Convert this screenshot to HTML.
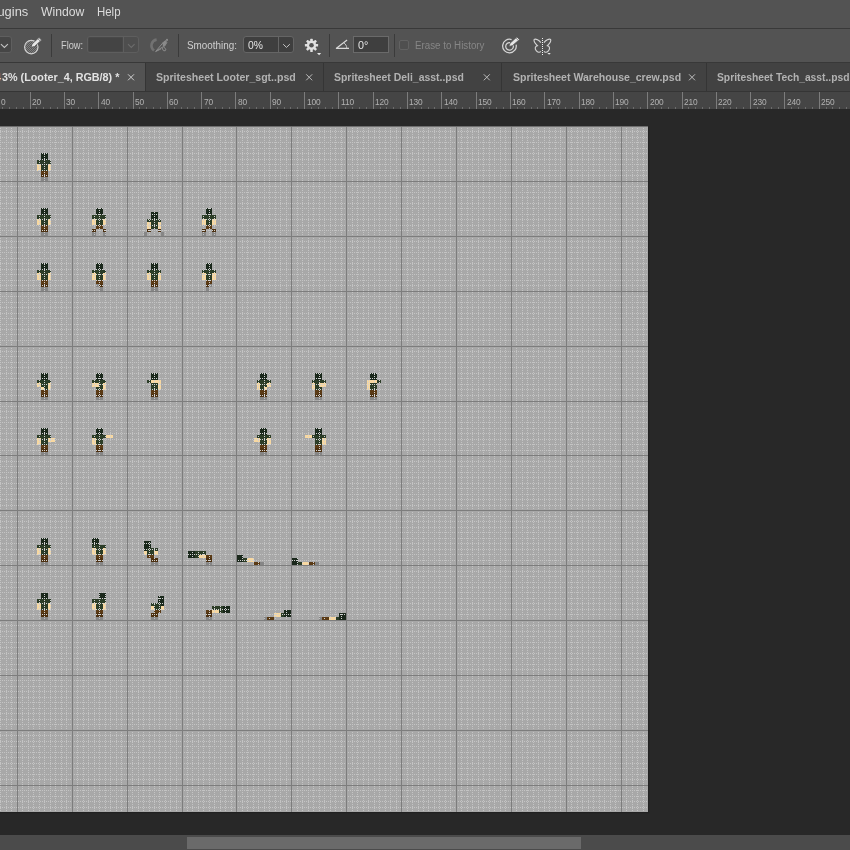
<!DOCTYPE html><html><head><meta charset="utf-8"><title>ps</title><style>

html,body{margin:0;padding:0}
body{width:850px;height:850px;overflow:hidden;position:relative;background:#282828;font-family:"Liberation Sans",sans-serif}
.a{position:absolute}
.t{position:absolute;white-space:nowrap;line-height:1;}
.rl{position:absolute;top:97.9px;font-size:8.8px;line-height:1;color:#b2b2b2;white-space:nowrap;letter-spacing:-0.1px;transform:scale(0.95,1.1);transform-origin:0 85%}

</style></head><body>
<div class="a" style="left:0;top:0;width:850px;height:62px;background:#535353"></div>
<div class="a" style="left:0;top:28px;width:850px;height:1px;background:#393939"></div>
<div class="a" style="left:0;top:62px;width:850px;height:30px;background:#424242"></div>
<div class="a" style="left:0;top:62px;width:850px;height:1px;background:#383838"></div>
<div class="a" style="left:0;top:63px;width:145px;height:29px;background:#535353"></div>
<div class="a" style="left:145px;top:63px;width:1px;height:28px;background:#353535"></div>
<div class="a" style="left:323px;top:63px;width:1px;height:28px;background:#353535"></div>
<div class="a" style="left:501px;top:63px;width:1px;height:28px;background:#353535"></div>
<div class="a" style="left:706px;top:63px;width:1px;height:28px;background:#353535"></div>
<div class="a" style="left:0;top:91px;width:850px;height:1px;background:#353535"></div>
<svg width="850" height="17" viewBox="0 92 850 17" style="position:absolute;left:0;top:92px" shape-rendering="crispEdges">
<rect x="0" y="92" width="850" height="17" fill="#454545"/>
<path d="M30.5 92 V109 M64.5 92 V109 M98.5 92 V109 M133.5 92 V109 M167.5 92 V109 M201.5 92 V109 M235.5 92 V109 M270.5 92 V109 M304.5 92 V109 M338.5 92 V109 M373.5 92 V109 M407.5 92 V109 M441.5 92 V109 M476.5 92 V109 M510.5 92 V109 M544.5 92 V109 M579.5 92 V109 M613.5 92 V109 M647.5 92 V109 M682.5 92 V109 M716.5 92 V109 M750.5 92 V109 M784.5 92 V109 M819.5 92 V109" stroke="#7c7c7c" stroke-width="1" fill="none"/>
<path d="M2.5 107 V109 M9.5 107 V109 M16.5 107 V109 M23.5 107 V109 M36.5 107 V109 M43.5 107 V109 M50.5 107 V109 M57.5 107 V109 M71.5 107 V109 M78.5 107 V109 M85.5 107 V109 M91.5 107 V109 M105.5 107 V109 M112.5 107 V109 M119.5 107 V109 M126.5 107 V109 M139.5 107 V109 M146.5 107 V109 M153.5 107 V109 M160.5 107 V109 M174.5 107 V109 M181.5 107 V109 M187.5 107 V109 M194.5 107 V109 M208.5 107 V109 M215.5 107 V109 M222.5 107 V109 M229.5 107 V109 M242.5 107 V109 M249.5 107 V109 M256.5 107 V109 M263.5 107 V109 M277.5 107 V109 M284.5 107 V109 M290.5 107 V109 M297.5 107 V109 M311.5 107 V109 M318.5 107 V109 M325.5 107 V109 M332.5 107 V109 M345.5 107 V109 M352.5 107 V109 M359.5 107 V109 M366.5 107 V109 M380.5 107 V109 M386.5 107 V109 M393.5 107 V109 M400.5 107 V109 M414.5 107 V109 M421.5 107 V109 M428.5 107 V109 M434.5 107 V109 M448.5 107 V109 M455.5 107 V109 M462.5 107 V109 M469.5 107 V109 M483.5 107 V109 M489.5 107 V109 M496.5 107 V109 M503.5 107 V109 M517.5 107 V109 M524.5 107 V109 M531.5 107 V109 M537.5 107 V109 M551.5 107 V109 M558.5 107 V109 M565.5 107 V109 M572.5 107 V109 M585.5 107 V109 M592.5 107 V109 M599.5 107 V109 M606.5 107 V109 M620.5 107 V109 M627.5 107 V109 M633.5 107 V109 M640.5 107 V109 M654.5 107 V109 M661.5 107 V109 M668.5 107 V109 M675.5 107 V109 M688.5 107 V109 M695.5 107 V109 M702.5 107 V109 M709.5 107 V109 M723.5 107 V109 M730.5 107 V109 M736.5 107 V109 M743.5 107 V109 M757.5 107 V109 M764.5 107 V109 M771.5 107 V109 M778.5 107 V109 M791.5 107 V109 M798.5 107 V109 M805.5 107 V109 M812.5 107 V109 M826.5 107 V109 M832.5 107 V109 M839.5 107 V109 M846.5 107 V109" stroke="#6c6c6c" stroke-width="1" fill="none"/>
</svg>
<span class="rl" style="left:1.2px">0</span>
<span class="rl" style="left:32.0px">20</span>
<span class="rl" style="left:66.3px">30</span>
<span class="rl" style="left:100.6px">40</span>
<span class="rl" style="left:135.0px">50</span>
<span class="rl" style="left:169.3px">60</span>
<span class="rl" style="left:203.6px">70</span>
<span class="rl" style="left:237.9px">80</span>
<span class="rl" style="left:272.2px">90</span>
<span class="rl" style="left:306.5px">100</span>
<span class="rl" style="left:340.8px">110</span>
<span class="rl" style="left:375.1px">120</span>
<span class="rl" style="left:409.4px">130</span>
<span class="rl" style="left:443.7px">140</span>
<span class="rl" style="left:478.1px">150</span>
<span class="rl" style="left:512.4px">160</span>
<span class="rl" style="left:546.7px">170</span>
<span class="rl" style="left:581.0px">180</span>
<span class="rl" style="left:615.3px">190</span>
<span class="rl" style="left:649.6px">200</span>
<span class="rl" style="left:683.9px">210</span>
<span class="rl" style="left:718.2px">220</span>
<span class="rl" style="left:752.5px">230</span>
<span class="rl" style="left:786.8px">240</span>
<span class="rl" style="left:821.1px">250</span>
<svg width="850" height="850" viewBox="0 0 850 850" style="position:absolute;left:0;top:0" shape-rendering="crispEdges">
<defs>
<clipPath id="cv"><rect x="0" y="127" width="648" height="685"/></clipPath>
<clipPath id="sp">
<rect x="41" y="153" width="7" height="4"/>
<rect x="41" y="157" width="7" height="3"/>
<rect x="37" y="160" width="14" height="4"/>
<rect x="41" y="164" width="7" height="3"/>
<rect x="37" y="164" width="4" height="3"/>
<rect x="48" y="164" width="3" height="3"/>
<rect x="41" y="167" width="7" height="4"/>
<rect x="37" y="167" width="4" height="4"/>
<rect x="48" y="167" width="3" height="4"/>
<rect x="41" y="171" width="7" height="3"/>
<rect x="41" y="174" width="7" height="3"/>
<rect x="41" y="208" width="7" height="4"/>
<rect x="96" y="208" width="7" height="4"/>
<rect x="206" y="208" width="6" height="4"/>
<rect x="41" y="212" width="7" height="3"/>
<rect x="96" y="212" width="7" height="3"/>
<rect x="151" y="212" width="7" height="3"/>
<rect x="206" y="212" width="6" height="3"/>
<rect x="151" y="215" width="7" height="4"/>
<rect x="37" y="215" width="14" height="4"/>
<rect x="92" y="215" width="14" height="4"/>
<rect x="202" y="215" width="14" height="4"/>
<rect x="41" y="219" width="7" height="3"/>
<rect x="96" y="219" width="7" height="3"/>
<rect x="147" y="219" width="14" height="3"/>
<rect x="206" y="219" width="6" height="3"/>
<rect x="37" y="219" width="4" height="3"/>
<rect x="48" y="219" width="3" height="3"/>
<rect x="92" y="219" width="4" height="3"/>
<rect x="103" y="219" width="3" height="3"/>
<rect x="202" y="219" width="4" height="3"/>
<rect x="212" y="219" width="4" height="3"/>
<rect x="41" y="222" width="7" height="3"/>
<rect x="96" y="222" width="7" height="3"/>
<rect x="151" y="222" width="7" height="3"/>
<rect x="206" y="222" width="6" height="3"/>
<rect x="37" y="222" width="4" height="3"/>
<rect x="48" y="222" width="3" height="3"/>
<rect x="92" y="222" width="4" height="3"/>
<rect x="103" y="222" width="3" height="3"/>
<rect x="147" y="222" width="4" height="3"/>
<rect x="158" y="222" width="3" height="3"/>
<rect x="202" y="222" width="4" height="3"/>
<rect x="212" y="222" width="4" height="3"/>
<rect x="151" y="225" width="7" height="4"/>
<rect x="41" y="225" width="7" height="4"/>
<rect x="96" y="225" width="7" height="4"/>
<rect x="206" y="225" width="6" height="4"/>
<rect x="147" y="225" width="4" height="4"/>
<rect x="158" y="225" width="3" height="4"/>
<rect x="41" y="229" width="7" height="3"/>
<rect x="92" y="229" width="4" height="3"/>
<rect x="103" y="229" width="3" height="3"/>
<rect x="147" y="229" width="4" height="3"/>
<rect x="158" y="229" width="3" height="3"/>
<rect x="202" y="229" width="4" height="3"/>
<rect x="212" y="229" width="4" height="3"/>
<rect x="41" y="263" width="7" height="4"/>
<rect x="96" y="263" width="7" height="4"/>
<rect x="151" y="263" width="7" height="4"/>
<rect x="206" y="263" width="6" height="4"/>
<rect x="41" y="267" width="7" height="3"/>
<rect x="96" y="267" width="7" height="3"/>
<rect x="151" y="267" width="7" height="3"/>
<rect x="206" y="267" width="6" height="3"/>
<rect x="37" y="270" width="14" height="3"/>
<rect x="92" y="270" width="14" height="3"/>
<rect x="147" y="270" width="14" height="3"/>
<rect x="202" y="270" width="14" height="3"/>
<rect x="41" y="273" width="7" height="4"/>
<rect x="96" y="273" width="7" height="4"/>
<rect x="151" y="273" width="7" height="4"/>
<rect x="206" y="273" width="6" height="4"/>
<rect x="37" y="273" width="4" height="4"/>
<rect x="48" y="273" width="3" height="4"/>
<rect x="92" y="273" width="4" height="4"/>
<rect x="103" y="273" width="3" height="4"/>
<rect x="147" y="273" width="4" height="4"/>
<rect x="158" y="273" width="3" height="4"/>
<rect x="202" y="273" width="4" height="4"/>
<rect x="212" y="273" width="4" height="4"/>
<rect x="41" y="277" width="7" height="3"/>
<rect x="96" y="277" width="7" height="3"/>
<rect x="151" y="277" width="7" height="3"/>
<rect x="206" y="277" width="6" height="3"/>
<rect x="37" y="277" width="4" height="3"/>
<rect x="48" y="277" width="3" height="3"/>
<rect x="92" y="277" width="4" height="3"/>
<rect x="103" y="277" width="3" height="3"/>
<rect x="147" y="277" width="4" height="3"/>
<rect x="158" y="277" width="3" height="3"/>
<rect x="202" y="277" width="4" height="3"/>
<rect x="212" y="277" width="4" height="3"/>
<rect x="41" y="280" width="7" height="4"/>
<rect x="96" y="280" width="7" height="4"/>
<rect x="151" y="280" width="7" height="4"/>
<rect x="206" y="280" width="6" height="4"/>
<rect x="41" y="284" width="7" height="3"/>
<rect x="99" y="284" width="4" height="3"/>
<rect x="151" y="284" width="7" height="3"/>
<rect x="206" y="284" width="3" height="3"/>
<rect x="41" y="373" width="7" height="3"/>
<rect x="96" y="373" width="7" height="3"/>
<rect x="151" y="373" width="7" height="3"/>
<rect x="260" y="373" width="7" height="3"/>
<rect x="315" y="373" width="7" height="3"/>
<rect x="370" y="373" width="7" height="3"/>
<rect x="41" y="376" width="7" height="4"/>
<rect x="96" y="376" width="7" height="4"/>
<rect x="151" y="376" width="7" height="4"/>
<rect x="260" y="376" width="7" height="4"/>
<rect x="315" y="376" width="7" height="4"/>
<rect x="370" y="376" width="7" height="4"/>
<rect x="37" y="380" width="14" height="3"/>
<rect x="92" y="380" width="14" height="3"/>
<rect x="147" y="380" width="4" height="3"/>
<rect x="257" y="380" width="14" height="3"/>
<rect x="312" y="380" width="14" height="3"/>
<rect x="377" y="380" width="4" height="3"/>
<rect x="151" y="380" width="10" height="3"/>
<rect x="367" y="380" width="10" height="3"/>
<rect x="41" y="383" width="7" height="4"/>
<rect x="99" y="383" width="4" height="4"/>
<rect x="151" y="383" width="7" height="4"/>
<rect x="260" y="383" width="7" height="4"/>
<rect x="315" y="383" width="4" height="4"/>
<rect x="370" y="383" width="7" height="4"/>
<rect x="37" y="383" width="4" height="4"/>
<rect x="48" y="383" width="3" height="4"/>
<rect x="92" y="383" width="7" height="4"/>
<rect x="103" y="383" width="3" height="4"/>
<rect x="158" y="383" width="3" height="4"/>
<rect x="257" y="383" width="3" height="4"/>
<rect x="267" y="383" width="4" height="4"/>
<rect x="312" y="383" width="3" height="4"/>
<rect x="319" y="383" width="7" height="4"/>
<rect x="367" y="383" width="3" height="4"/>
<rect x="44" y="387" width="4" height="3"/>
<rect x="96" y="387" width="7" height="3"/>
<rect x="151" y="387" width="7" height="3"/>
<rect x="260" y="387" width="4" height="3"/>
<rect x="315" y="387" width="7" height="3"/>
<rect x="370" y="387" width="7" height="3"/>
<rect x="41" y="387" width="3" height="3"/>
<rect x="48" y="387" width="3" height="3"/>
<rect x="103" y="387" width="3" height="3"/>
<rect x="158" y="387" width="3" height="3"/>
<rect x="257" y="387" width="3" height="3"/>
<rect x="264" y="387" width="3" height="3"/>
<rect x="312" y="387" width="3" height="3"/>
<rect x="367" y="387" width="3" height="3"/>
<rect x="41" y="390" width="7" height="4"/>
<rect x="96" y="390" width="7" height="4"/>
<rect x="151" y="390" width="7" height="4"/>
<rect x="260" y="390" width="7" height="4"/>
<rect x="315" y="390" width="7" height="4"/>
<rect x="370" y="390" width="7" height="4"/>
<rect x="41" y="394" width="7" height="3"/>
<rect x="96" y="394" width="7" height="3"/>
<rect x="151" y="394" width="7" height="3"/>
<rect x="260" y="394" width="7" height="3"/>
<rect x="315" y="394" width="7" height="3"/>
<rect x="370" y="394" width="7" height="3"/>
<rect x="41" y="428" width="7" height="3"/>
<rect x="96" y="428" width="7" height="3"/>
<rect x="260" y="428" width="7" height="3"/>
<rect x="315" y="428" width="7" height="3"/>
<rect x="41" y="431" width="7" height="4"/>
<rect x="96" y="431" width="7" height="4"/>
<rect x="260" y="431" width="7" height="4"/>
<rect x="315" y="431" width="7" height="4"/>
<rect x="37" y="435" width="14" height="3"/>
<rect x="92" y="435" width="14" height="3"/>
<rect x="257" y="435" width="14" height="3"/>
<rect x="312" y="435" width="14" height="3"/>
<rect x="106" y="435" width="7" height="3"/>
<rect x="305" y="435" width="7" height="3"/>
<rect x="41" y="438" width="7" height="4"/>
<rect x="96" y="438" width="7" height="4"/>
<rect x="260" y="438" width="7" height="4"/>
<rect x="315" y="438" width="7" height="4"/>
<rect x="37" y="438" width="4" height="4"/>
<rect x="48" y="438" width="7" height="4"/>
<rect x="92" y="438" width="4" height="4"/>
<rect x="254" y="438" width="6" height="4"/>
<rect x="267" y="438" width="4" height="4"/>
<rect x="322" y="438" width="4" height="4"/>
<rect x="41" y="442" width="7" height="3"/>
<rect x="96" y="442" width="7" height="3"/>
<rect x="260" y="442" width="7" height="3"/>
<rect x="315" y="442" width="7" height="3"/>
<rect x="37" y="442" width="4" height="3"/>
<rect x="92" y="442" width="4" height="3"/>
<rect x="267" y="442" width="4" height="3"/>
<rect x="322" y="442" width="4" height="3"/>
<rect x="41" y="445" width="7" height="3"/>
<rect x="96" y="445" width="7" height="3"/>
<rect x="260" y="445" width="7" height="3"/>
<rect x="315" y="445" width="7" height="3"/>
<rect x="41" y="448" width="7" height="4"/>
<rect x="96" y="448" width="7" height="4"/>
<rect x="260" y="448" width="7" height="4"/>
<rect x="315" y="448" width="7" height="4"/>
<rect x="41" y="538" width="7" height="3"/>
<rect x="92" y="538" width="7" height="3"/>
<rect x="41" y="541" width="7" height="4"/>
<rect x="92" y="541" width="7" height="4"/>
<rect x="144" y="541" width="7" height="4"/>
<rect x="144" y="545" width="7" height="3"/>
<rect x="37" y="545" width="14" height="3"/>
<rect x="92" y="545" width="14" height="3"/>
<rect x="144" y="548" width="3" height="3"/>
<rect x="41" y="548" width="7" height="3"/>
<rect x="96" y="548" width="7" height="3"/>
<rect x="147" y="548" width="11" height="3"/>
<rect x="37" y="548" width="4" height="3"/>
<rect x="48" y="548" width="3" height="3"/>
<rect x="92" y="548" width="4" height="3"/>
<rect x="103" y="548" width="3" height="3"/>
<rect x="188" y="551" width="7" height="4"/>
<rect x="41" y="551" width="7" height="4"/>
<rect x="96" y="551" width="7" height="4"/>
<rect x="147" y="551" width="7" height="4"/>
<rect x="195" y="551" width="11" height="4"/>
<rect x="37" y="551" width="4" height="4"/>
<rect x="48" y="551" width="3" height="4"/>
<rect x="92" y="551" width="4" height="4"/>
<rect x="103" y="551" width="3" height="4"/>
<rect x="144" y="551" width="3" height="4"/>
<rect x="154" y="551" width="4" height="4"/>
<rect x="188" y="555" width="7" height="3"/>
<rect x="236" y="555" width="7" height="3"/>
<rect x="195" y="555" width="4" height="3"/>
<rect x="41" y="555" width="7" height="3"/>
<rect x="96" y="555" width="7" height="3"/>
<rect x="147" y="555" width="7" height="3"/>
<rect x="206" y="555" width="6" height="3"/>
<rect x="199" y="555" width="7" height="3"/>
<rect x="236" y="558" width="7" height="4"/>
<rect x="291" y="558" width="7" height="4"/>
<rect x="243" y="558" width="4" height="4"/>
<rect x="41" y="558" width="7" height="4"/>
<rect x="96" y="558" width="7" height="4"/>
<rect x="151" y="558" width="7" height="4"/>
<rect x="206" y="558" width="6" height="4"/>
<rect x="247" y="558" width="7" height="4"/>
<rect x="291" y="562" width="7" height="3"/>
<rect x="298" y="562" width="4" height="3"/>
<rect x="254" y="562" width="6" height="3"/>
<rect x="309" y="562" width="6" height="3"/>
<rect x="302" y="562" width="7" height="3"/>
<rect x="41" y="593" width="7" height="3"/>
<rect x="99" y="593" width="7" height="3"/>
<rect x="41" y="596" width="7" height="3"/>
<rect x="99" y="596" width="7" height="3"/>
<rect x="158" y="596" width="6" height="3"/>
<rect x="158" y="599" width="6" height="4"/>
<rect x="37" y="599" width="14" height="4"/>
<rect x="92" y="599" width="14" height="4"/>
<rect x="161" y="603" width="3" height="3"/>
<rect x="41" y="603" width="7" height="3"/>
<rect x="96" y="603" width="7" height="3"/>
<rect x="151" y="603" width="10" height="3"/>
<rect x="37" y="603" width="4" height="3"/>
<rect x="48" y="603" width="3" height="3"/>
<rect x="92" y="603" width="4" height="3"/>
<rect x="103" y="603" width="3" height="3"/>
<rect x="223" y="606" width="7" height="4"/>
<rect x="41" y="606" width="7" height="4"/>
<rect x="96" y="606" width="7" height="4"/>
<rect x="154" y="606" width="7" height="4"/>
<rect x="212" y="606" width="11" height="4"/>
<rect x="37" y="606" width="4" height="4"/>
<rect x="48" y="606" width="3" height="4"/>
<rect x="92" y="606" width="4" height="4"/>
<rect x="103" y="606" width="3" height="4"/>
<rect x="151" y="606" width="3" height="4"/>
<rect x="161" y="606" width="3" height="4"/>
<rect x="223" y="610" width="7" height="3"/>
<rect x="284" y="610" width="7" height="3"/>
<rect x="219" y="610" width="4" height="3"/>
<rect x="41" y="610" width="7" height="3"/>
<rect x="96" y="610" width="7" height="3"/>
<rect x="154" y="610" width="7" height="3"/>
<rect x="206" y="610" width="6" height="3"/>
<rect x="212" y="610" width="7" height="3"/>
<rect x="284" y="613" width="7" height="4"/>
<rect x="339" y="613" width="7" height="4"/>
<rect x="281" y="613" width="3" height="4"/>
<rect x="41" y="613" width="7" height="4"/>
<rect x="96" y="613" width="7" height="4"/>
<rect x="151" y="613" width="7" height="4"/>
<rect x="206" y="613" width="6" height="4"/>
<rect x="274" y="613" width="7" height="4"/>
<rect x="339" y="617" width="7" height="3"/>
<rect x="336" y="617" width="3" height="3"/>
<rect x="267" y="617" width="7" height="3"/>
<rect x="322" y="617" width="7" height="3"/>
<rect x="329" y="617" width="7" height="3"/>
</clipPath>
<g id="dots" stroke-width="1" stroke-dasharray="1 1" fill="none">
<path d="M0.5 126 V812"/>
<path d="M6.5 126 V812"/>
<path d="M11.5 126 V812"/>
<path d="M22.5 126 V812"/>
<path d="M28.5 126 V812"/>
<path d="M33.5 126 V812"/>
<path d="M39.5 126 V812"/>
<path d="M44.5 126 V812"/>
<path d="M50.5 126 V812"/>
<path d="M55.5 126 V812"/>
<path d="M61.5 126 V812"/>
<path d="M66.5 126 V812"/>
<path d="M77.5 126 V812"/>
<path d="M83.5 126 V812"/>
<path d="M88.5 126 V812"/>
<path d="M94.5 126 V812"/>
<path d="M99.5 126 V812"/>
<path d="M105.5 126 V812"/>
<path d="M110.5 126 V812"/>
<path d="M116.5 126 V812"/>
<path d="M121.5 126 V812"/>
<path d="M132.5 126 V812"/>
<path d="M138.5 126 V812"/>
<path d="M143.5 126 V812"/>
<path d="M149.5 126 V812"/>
<path d="M154.5 126 V812"/>
<path d="M159.5 126 V812"/>
<path d="M165.5 126 V812"/>
<path d="M170.5 126 V812"/>
<path d="M176.5 126 V812"/>
<path d="M187.5 126 V812"/>
<path d="M192.5 126 V812"/>
<path d="M198.5 126 V812"/>
<path d="M203.5 126 V812"/>
<path d="M209.5 126 V812"/>
<path d="M214.5 126 V812"/>
<path d="M220.5 126 V812"/>
<path d="M225.5 126 V812"/>
<path d="M231.5 126 V812"/>
<path d="M242.5 126 V812"/>
<path d="M247.5 126 V812"/>
<path d="M253.5 126 V812"/>
<path d="M258.5 126 V812"/>
<path d="M264.5 126 V812"/>
<path d="M269.5 126 V812"/>
<path d="M275.5 126 V812"/>
<path d="M280.5 126 V812"/>
<path d="M286.5 126 V812"/>
<path d="M297.5 126 V812"/>
<path d="M302.5 126 V812"/>
<path d="M308.5 126 V812"/>
<path d="M313.5 126 V812"/>
<path d="M319.5 126 V812"/>
<path d="M324.5 126 V812"/>
<path d="M330.5 126 V812"/>
<path d="M335.5 126 V812"/>
<path d="M341.5 126 V812"/>
<path d="M352.5 126 V812"/>
<path d="M357.5 126 V812"/>
<path d="M363.5 126 V812"/>
<path d="M368.5 126 V812"/>
<path d="M374.5 126 V812"/>
<path d="M379.5 126 V812"/>
<path d="M385.5 126 V812"/>
<path d="M390.5 126 V812"/>
<path d="M396.5 126 V812"/>
<path d="M407.5 126 V812"/>
<path d="M412.5 126 V812"/>
<path d="M418.5 126 V812"/>
<path d="M423.5 126 V812"/>
<path d="M428.5 126 V812"/>
<path d="M434.5 126 V812"/>
<path d="M439.5 126 V812"/>
<path d="M445.5 126 V812"/>
<path d="M450.5 126 V812"/>
<path d="M461.5 126 V812"/>
<path d="M467.5 126 V812"/>
<path d="M472.5 126 V812"/>
<path d="M478.5 126 V812"/>
<path d="M483.5 126 V812"/>
<path d="M489.5 126 V812"/>
<path d="M494.5 126 V812"/>
<path d="M500.5 126 V812"/>
<path d="M505.5 126 V812"/>
<path d="M516.5 126 V812"/>
<path d="M522.5 126 V812"/>
<path d="M527.5 126 V812"/>
<path d="M533.5 126 V812"/>
<path d="M538.5 126 V812"/>
<path d="M544.5 126 V812"/>
<path d="M549.5 126 V812"/>
<path d="M555.5 126 V812"/>
<path d="M560.5 126 V812"/>
<path d="M571.5 126 V812"/>
<path d="M577.5 126 V812"/>
<path d="M582.5 126 V812"/>
<path d="M588.5 126 V812"/>
<path d="M593.5 126 V812"/>
<path d="M599.5 126 V812"/>
<path d="M604.5 126 V812"/>
<path d="M610.5 126 V812"/>
<path d="M615.5 126 V812"/>
<path d="M626.5 126 V812"/>
<path d="M632.5 126 V812"/>
<path d="M637.5 126 V812"/>
<path d="M643.5 126 V812"/>
<path d="M0 131.5 H648"/>
<path d="M0 137.5 H648"/>
<path d="M0 142.5 H648"/>
<path d="M0 148.5 H648"/>
<path d="M0 153.5 H648"/>
<path d="M0 159.5 H648"/>
<path d="M0 164.5 H648"/>
<path d="M0 170.5 H648"/>
<path d="M0 175.5 H648"/>
<path d="M0 186.5 H648"/>
<path d="M0 192.5 H648"/>
<path d="M0 197.5 H648"/>
<path d="M0 203.5 H648"/>
<path d="M0 208.5 H648"/>
<path d="M0 214.5 H648"/>
<path d="M0 219.5 H648"/>
<path d="M0 225.5 H648"/>
<path d="M0 230.5 H648"/>
<path d="M0 241.5 H648"/>
<path d="M0 247.5 H648"/>
<path d="M0 252.5 H648"/>
<path d="M0 258.5 H648"/>
<path d="M0 263.5 H648"/>
<path d="M0 269.5 H648"/>
<path d="M0 274.5 H648"/>
<path d="M0 280.5 H648"/>
<path d="M0 285.5 H648"/>
<path d="M0 296.5 H648"/>
<path d="M0 302.5 H648"/>
<path d="M0 307.5 H648"/>
<path d="M0 313.5 H648"/>
<path d="M0 318.5 H648"/>
<path d="M0 324.5 H648"/>
<path d="M0 329.5 H648"/>
<path d="M0 334.5 H648"/>
<path d="M0 340.5 H648"/>
<path d="M0 351.5 H648"/>
<path d="M0 356.5 H648"/>
<path d="M0 362.5 H648"/>
<path d="M0 367.5 H648"/>
<path d="M0 373.5 H648"/>
<path d="M0 378.5 H648"/>
<path d="M0 384.5 H648"/>
<path d="M0 389.5 H648"/>
<path d="M0 395.5 H648"/>
<path d="M0 406.5 H648"/>
<path d="M0 411.5 H648"/>
<path d="M0 417.5 H648"/>
<path d="M0 422.5 H648"/>
<path d="M0 428.5 H648"/>
<path d="M0 433.5 H648"/>
<path d="M0 439.5 H648"/>
<path d="M0 444.5 H648"/>
<path d="M0 450.5 H648"/>
<path d="M0 461.5 H648"/>
<path d="M0 466.5 H648"/>
<path d="M0 472.5 H648"/>
<path d="M0 477.5 H648"/>
<path d="M0 483.5 H648"/>
<path d="M0 488.5 H648"/>
<path d="M0 494.5 H648"/>
<path d="M0 499.5 H648"/>
<path d="M0 505.5 H648"/>
<path d="M0 516.5 H648"/>
<path d="M0 521.5 H648"/>
<path d="M0 527.5 H648"/>
<path d="M0 532.5 H648"/>
<path d="M0 538.5 H648"/>
<path d="M0 543.5 H648"/>
<path d="M0 549.5 H648"/>
<path d="M0 554.5 H648"/>
<path d="M0 560.5 H648"/>
<path d="M0 571.5 H648"/>
<path d="M0 576.5 H648"/>
<path d="M0 582.5 H648"/>
<path d="M0 587.5 H648"/>
<path d="M0 592.5 H648"/>
<path d="M0 598.5 H648"/>
<path d="M0 603.5 H648"/>
<path d="M0 609.5 H648"/>
<path d="M0 614.5 H648"/>
<path d="M0 625.5 H648"/>
<path d="M0 631.5 H648"/>
<path d="M0 636.5 H648"/>
<path d="M0 642.5 H648"/>
<path d="M0 647.5 H648"/>
<path d="M0 653.5 H648"/>
<path d="M0 658.5 H648"/>
<path d="M0 664.5 H648"/>
<path d="M0 669.5 H648"/>
<path d="M0 680.5 H648"/>
<path d="M0 686.5 H648"/>
<path d="M0 691.5 H648"/>
<path d="M0 697.5 H648"/>
<path d="M0 702.5 H648"/>
<path d="M0 708.5 H648"/>
<path d="M0 713.5 H648"/>
<path d="M0 719.5 H648"/>
<path d="M0 724.5 H648"/>
<path d="M0 735.5 H648"/>
<path d="M0 741.5 H648"/>
<path d="M0 746.5 H648"/>
<path d="M0 752.5 H648"/>
<path d="M0 757.5 H648"/>
<path d="M0 763.5 H648"/>
<path d="M0 768.5 H648"/>
<path d="M0 774.5 H648"/>
<path d="M0 779.5 H648"/>
<path d="M0 790.5 H648"/>
<path d="M0 796.5 H648"/>
<path d="M0 801.5 H648"/>
<path d="M0 807.5 H648"/>
</g>
</defs>
<rect x="-40" y="126" width="690" height="688" fill="#262626"/>
<rect x="-40" y="127" width="689" height="686" fill="#212121"/>
<rect x="-40" y="126" width="688" height="1" fill="#6e6e6e"/>
<rect x="-40" y="127" width="688" height="685" fill="#a8a8a8"/>
<rect x="41" y="153" width="7" height="4" fill="#1a281b"/>
<rect x="41" y="157" width="7" height="3" fill="#1a281b"/>
<rect x="37" y="160" width="14" height="4" fill="#2c3d27"/>
<rect x="41" y="164" width="7" height="3" fill="#2c3d27"/>
<rect x="37" y="164" width="4" height="3" fill="#f7d8a2"/>
<rect x="48" y="164" width="3" height="3" fill="#f7d8a2"/>
<rect x="41" y="167" width="7" height="4" fill="#2c3d27"/>
<rect x="37" y="167" width="4" height="4" fill="#f7d8a2"/>
<rect x="48" y="167" width="3" height="4" fill="#f7d8a2"/>
<rect x="41" y="171" width="7" height="3" fill="#5a3a15"/>
<rect x="41" y="174" width="7" height="3" fill="#4c3010"/>
<rect x="41" y="177" width="7" height="4" fill="#868686"/>
<rect x="41" y="208" width="7" height="4" fill="#1a281b"/>
<rect x="96" y="208" width="7" height="4" fill="#1a281b"/>
<rect x="206" y="208" width="6" height="4" fill="#1a281b"/>
<rect x="41" y="212" width="7" height="3" fill="#1a281b"/>
<rect x="96" y="212" width="7" height="3" fill="#1a281b"/>
<rect x="151" y="212" width="7" height="3" fill="#1a281b"/>
<rect x="206" y="212" width="6" height="3" fill="#1a281b"/>
<rect x="151" y="215" width="7" height="4" fill="#1a281b"/>
<rect x="37" y="215" width="14" height="4" fill="#2c3d27"/>
<rect x="92" y="215" width="14" height="4" fill="#2c3d27"/>
<rect x="202" y="215" width="14" height="4" fill="#2c3d27"/>
<rect x="41" y="219" width="7" height="3" fill="#2c3d27"/>
<rect x="96" y="219" width="7" height="3" fill="#2c3d27"/>
<rect x="147" y="219" width="14" height="3" fill="#2c3d27"/>
<rect x="206" y="219" width="6" height="3" fill="#2c3d27"/>
<rect x="37" y="219" width="4" height="3" fill="#f7d8a2"/>
<rect x="48" y="219" width="3" height="3" fill="#f7d8a2"/>
<rect x="92" y="219" width="4" height="3" fill="#f7d8a2"/>
<rect x="103" y="219" width="3" height="3" fill="#f7d8a2"/>
<rect x="202" y="219" width="4" height="3" fill="#f7d8a2"/>
<rect x="212" y="219" width="4" height="3" fill="#f7d8a2"/>
<rect x="41" y="222" width="7" height="3" fill="#2c3d27"/>
<rect x="96" y="222" width="7" height="3" fill="#2c3d27"/>
<rect x="151" y="222" width="7" height="3" fill="#2c3d27"/>
<rect x="206" y="222" width="6" height="3" fill="#2c3d27"/>
<rect x="37" y="222" width="4" height="3" fill="#f7d8a2"/>
<rect x="48" y="222" width="3" height="3" fill="#f7d8a2"/>
<rect x="92" y="222" width="4" height="3" fill="#f7d8a2"/>
<rect x="103" y="222" width="3" height="3" fill="#f7d8a2"/>
<rect x="147" y="222" width="4" height="3" fill="#f7d8a2"/>
<rect x="158" y="222" width="3" height="3" fill="#f7d8a2"/>
<rect x="202" y="222" width="4" height="3" fill="#f7d8a2"/>
<rect x="212" y="222" width="4" height="3" fill="#f7d8a2"/>
<rect x="151" y="225" width="7" height="4" fill="#2c3d27"/>
<rect x="41" y="225" width="7" height="4" fill="#5a3a15"/>
<rect x="96" y="225" width="7" height="4" fill="#5a3a15"/>
<rect x="206" y="225" width="6" height="4" fill="#5a3a15"/>
<rect x="147" y="225" width="4" height="4" fill="#f7d8a2"/>
<rect x="158" y="225" width="3" height="4" fill="#f7d8a2"/>
<rect x="41" y="229" width="7" height="3" fill="#4c3010"/>
<rect x="92" y="229" width="4" height="3" fill="#4c3010"/>
<rect x="103" y="229" width="3" height="3" fill="#4c3010"/>
<rect x="147" y="229" width="4" height="3" fill="#4c3010"/>
<rect x="158" y="229" width="3" height="3" fill="#4c3010"/>
<rect x="202" y="229" width="4" height="3" fill="#4c3010"/>
<rect x="212" y="229" width="4" height="3" fill="#4c3010"/>
<rect x="41" y="232" width="7" height="4" fill="#868686"/>
<rect x="92" y="232" width="4" height="4" fill="#868686"/>
<rect x="103" y="232" width="3" height="4" fill="#868686"/>
<rect x="144" y="232" width="3" height="4" fill="#868686"/>
<rect x="161" y="232" width="3" height="4" fill="#868686"/>
<rect x="202" y="232" width="4" height="4" fill="#868686"/>
<rect x="212" y="232" width="4" height="4" fill="#868686"/>
<rect x="41" y="263" width="7" height="4" fill="#1a281b"/>
<rect x="96" y="263" width="7" height="4" fill="#1a281b"/>
<rect x="151" y="263" width="7" height="4" fill="#1a281b"/>
<rect x="206" y="263" width="6" height="4" fill="#1a281b"/>
<rect x="41" y="267" width="7" height="3" fill="#1a281b"/>
<rect x="96" y="267" width="7" height="3" fill="#1a281b"/>
<rect x="151" y="267" width="7" height="3" fill="#1a281b"/>
<rect x="206" y="267" width="6" height="3" fill="#1a281b"/>
<rect x="37" y="270" width="14" height="3" fill="#2c3d27"/>
<rect x="92" y="270" width="14" height="3" fill="#2c3d27"/>
<rect x="147" y="270" width="14" height="3" fill="#2c3d27"/>
<rect x="202" y="270" width="14" height="3" fill="#2c3d27"/>
<rect x="41" y="273" width="7" height="4" fill="#2c3d27"/>
<rect x="96" y="273" width="7" height="4" fill="#2c3d27"/>
<rect x="151" y="273" width="7" height="4" fill="#2c3d27"/>
<rect x="206" y="273" width="6" height="4" fill="#2c3d27"/>
<rect x="37" y="273" width="4" height="4" fill="#f7d8a2"/>
<rect x="48" y="273" width="3" height="4" fill="#f7d8a2"/>
<rect x="92" y="273" width="4" height="4" fill="#f7d8a2"/>
<rect x="103" y="273" width="3" height="4" fill="#f7d8a2"/>
<rect x="147" y="273" width="4" height="4" fill="#f7d8a2"/>
<rect x="158" y="273" width="3" height="4" fill="#f7d8a2"/>
<rect x="202" y="273" width="4" height="4" fill="#f7d8a2"/>
<rect x="212" y="273" width="4" height="4" fill="#f7d8a2"/>
<rect x="41" y="277" width="7" height="3" fill="#2c3d27"/>
<rect x="96" y="277" width="7" height="3" fill="#2c3d27"/>
<rect x="151" y="277" width="7" height="3" fill="#2c3d27"/>
<rect x="206" y="277" width="6" height="3" fill="#2c3d27"/>
<rect x="37" y="277" width="4" height="3" fill="#f7d8a2"/>
<rect x="48" y="277" width="3" height="3" fill="#f7d8a2"/>
<rect x="92" y="277" width="4" height="3" fill="#f7d8a2"/>
<rect x="103" y="277" width="3" height="3" fill="#f7d8a2"/>
<rect x="147" y="277" width="4" height="3" fill="#f7d8a2"/>
<rect x="158" y="277" width="3" height="3" fill="#f7d8a2"/>
<rect x="202" y="277" width="4" height="3" fill="#f7d8a2"/>
<rect x="212" y="277" width="4" height="3" fill="#f7d8a2"/>
<rect x="41" y="280" width="7" height="4" fill="#5a3a15"/>
<rect x="96" y="280" width="7" height="4" fill="#5a3a15"/>
<rect x="151" y="280" width="7" height="4" fill="#5a3a15"/>
<rect x="206" y="280" width="6" height="4" fill="#5a3a15"/>
<rect x="41" y="284" width="7" height="3" fill="#4c3010"/>
<rect x="99" y="284" width="4" height="3" fill="#4c3010"/>
<rect x="151" y="284" width="7" height="3" fill="#4c3010"/>
<rect x="206" y="284" width="3" height="3" fill="#4c3010"/>
<rect x="96" y="284" width="3" height="3" fill="#868686"/>
<rect x="209" y="284" width="3" height="3" fill="#868686"/>
<rect x="41" y="287" width="7" height="4" fill="#868686"/>
<rect x="99" y="287" width="4" height="4" fill="#868686"/>
<rect x="151" y="287" width="7" height="4" fill="#868686"/>
<rect x="206" y="287" width="3" height="4" fill="#868686"/>
<rect x="41" y="373" width="7" height="3" fill="#1a281b"/>
<rect x="96" y="373" width="7" height="3" fill="#1a281b"/>
<rect x="151" y="373" width="7" height="3" fill="#1a281b"/>
<rect x="260" y="373" width="7" height="3" fill="#1a281b"/>
<rect x="315" y="373" width="7" height="3" fill="#1a281b"/>
<rect x="370" y="373" width="7" height="3" fill="#1a281b"/>
<rect x="41" y="376" width="7" height="4" fill="#1a281b"/>
<rect x="96" y="376" width="7" height="4" fill="#1a281b"/>
<rect x="151" y="376" width="7" height="4" fill="#1a281b"/>
<rect x="260" y="376" width="7" height="4" fill="#1a281b"/>
<rect x="315" y="376" width="7" height="4" fill="#1a281b"/>
<rect x="370" y="376" width="7" height="4" fill="#1a281b"/>
<rect x="37" y="380" width="14" height="3" fill="#2c3d27"/>
<rect x="92" y="380" width="14" height="3" fill="#2c3d27"/>
<rect x="147" y="380" width="4" height="3" fill="#2c3d27"/>
<rect x="257" y="380" width="14" height="3" fill="#2c3d27"/>
<rect x="312" y="380" width="14" height="3" fill="#2c3d27"/>
<rect x="377" y="380" width="4" height="3" fill="#2c3d27"/>
<rect x="151" y="380" width="10" height="3" fill="#f7d8a2"/>
<rect x="367" y="380" width="10" height="3" fill="#f7d8a2"/>
<rect x="41" y="383" width="7" height="4" fill="#2c3d27"/>
<rect x="99" y="383" width="4" height="4" fill="#2c3d27"/>
<rect x="151" y="383" width="7" height="4" fill="#2c3d27"/>
<rect x="260" y="383" width="7" height="4" fill="#2c3d27"/>
<rect x="315" y="383" width="4" height="4" fill="#2c3d27"/>
<rect x="370" y="383" width="7" height="4" fill="#2c3d27"/>
<rect x="37" y="383" width="4" height="4" fill="#f7d8a2"/>
<rect x="48" y="383" width="3" height="4" fill="#f7d8a2"/>
<rect x="92" y="383" width="7" height="4" fill="#f7d8a2"/>
<rect x="103" y="383" width="3" height="4" fill="#f7d8a2"/>
<rect x="158" y="383" width="3" height="4" fill="#f7d8a2"/>
<rect x="257" y="383" width="3" height="4" fill="#f7d8a2"/>
<rect x="267" y="383" width="4" height="4" fill="#f7d8a2"/>
<rect x="312" y="383" width="3" height="4" fill="#f7d8a2"/>
<rect x="319" y="383" width="7" height="4" fill="#f7d8a2"/>
<rect x="367" y="383" width="3" height="4" fill="#f7d8a2"/>
<rect x="44" y="387" width="4" height="3" fill="#2c3d27"/>
<rect x="96" y="387" width="7" height="3" fill="#2c3d27"/>
<rect x="151" y="387" width="7" height="3" fill="#2c3d27"/>
<rect x="260" y="387" width="4" height="3" fill="#2c3d27"/>
<rect x="315" y="387" width="7" height="3" fill="#2c3d27"/>
<rect x="370" y="387" width="7" height="3" fill="#2c3d27"/>
<rect x="41" y="387" width="3" height="3" fill="#f7d8a2"/>
<rect x="48" y="387" width="3" height="3" fill="#f7d8a2"/>
<rect x="103" y="387" width="3" height="3" fill="#f7d8a2"/>
<rect x="158" y="387" width="3" height="3" fill="#f7d8a2"/>
<rect x="257" y="387" width="3" height="3" fill="#f7d8a2"/>
<rect x="264" y="387" width="3" height="3" fill="#f7d8a2"/>
<rect x="312" y="387" width="3" height="3" fill="#f7d8a2"/>
<rect x="367" y="387" width="3" height="3" fill="#f7d8a2"/>
<rect x="41" y="390" width="7" height="4" fill="#5a3a15"/>
<rect x="96" y="390" width="7" height="4" fill="#5a3a15"/>
<rect x="151" y="390" width="7" height="4" fill="#5a3a15"/>
<rect x="260" y="390" width="7" height="4" fill="#5a3a15"/>
<rect x="315" y="390" width="7" height="4" fill="#5a3a15"/>
<rect x="370" y="390" width="7" height="4" fill="#5a3a15"/>
<rect x="41" y="394" width="7" height="3" fill="#4c3010"/>
<rect x="96" y="394" width="7" height="3" fill="#4c3010"/>
<rect x="151" y="394" width="7" height="3" fill="#4c3010"/>
<rect x="260" y="394" width="7" height="3" fill="#4c3010"/>
<rect x="315" y="394" width="7" height="3" fill="#4c3010"/>
<rect x="370" y="394" width="7" height="3" fill="#4c3010"/>
<rect x="41" y="397" width="7" height="3" fill="#868686"/>
<rect x="96" y="397" width="7" height="3" fill="#868686"/>
<rect x="151" y="397" width="7" height="3" fill="#868686"/>
<rect x="260" y="397" width="7" height="3" fill="#868686"/>
<rect x="315" y="397" width="7" height="3" fill="#868686"/>
<rect x="370" y="397" width="7" height="3" fill="#868686"/>
<rect x="41" y="428" width="7" height="3" fill="#1a281b"/>
<rect x="96" y="428" width="7" height="3" fill="#1a281b"/>
<rect x="260" y="428" width="7" height="3" fill="#1a281b"/>
<rect x="315" y="428" width="7" height="3" fill="#1a281b"/>
<rect x="41" y="431" width="7" height="4" fill="#1a281b"/>
<rect x="96" y="431" width="7" height="4" fill="#1a281b"/>
<rect x="260" y="431" width="7" height="4" fill="#1a281b"/>
<rect x="315" y="431" width="7" height="4" fill="#1a281b"/>
<rect x="37" y="435" width="14" height="3" fill="#2c3d27"/>
<rect x="92" y="435" width="14" height="3" fill="#2c3d27"/>
<rect x="257" y="435" width="14" height="3" fill="#2c3d27"/>
<rect x="312" y="435" width="14" height="3" fill="#2c3d27"/>
<rect x="106" y="435" width="7" height="3" fill="#f7d8a2"/>
<rect x="305" y="435" width="7" height="3" fill="#f7d8a2"/>
<rect x="41" y="438" width="7" height="4" fill="#2c3d27"/>
<rect x="96" y="438" width="7" height="4" fill="#2c3d27"/>
<rect x="260" y="438" width="7" height="4" fill="#2c3d27"/>
<rect x="315" y="438" width="7" height="4" fill="#2c3d27"/>
<rect x="37" y="438" width="4" height="4" fill="#f7d8a2"/>
<rect x="48" y="438" width="7" height="4" fill="#f7d8a2"/>
<rect x="92" y="438" width="4" height="4" fill="#f7d8a2"/>
<rect x="254" y="438" width="6" height="4" fill="#f7d8a2"/>
<rect x="267" y="438" width="4" height="4" fill="#f7d8a2"/>
<rect x="322" y="438" width="4" height="4" fill="#f7d8a2"/>
<rect x="41" y="442" width="7" height="3" fill="#2c3d27"/>
<rect x="96" y="442" width="7" height="3" fill="#2c3d27"/>
<rect x="260" y="442" width="7" height="3" fill="#2c3d27"/>
<rect x="315" y="442" width="7" height="3" fill="#2c3d27"/>
<rect x="37" y="442" width="4" height="3" fill="#f7d8a2"/>
<rect x="92" y="442" width="4" height="3" fill="#f7d8a2"/>
<rect x="267" y="442" width="4" height="3" fill="#f7d8a2"/>
<rect x="322" y="442" width="4" height="3" fill="#f7d8a2"/>
<rect x="41" y="445" width="7" height="3" fill="#5a3a15"/>
<rect x="96" y="445" width="7" height="3" fill="#5a3a15"/>
<rect x="260" y="445" width="7" height="3" fill="#5a3a15"/>
<rect x="315" y="445" width="7" height="3" fill="#5a3a15"/>
<rect x="41" y="448" width="7" height="4" fill="#4c3010"/>
<rect x="96" y="448" width="7" height="4" fill="#4c3010"/>
<rect x="260" y="448" width="7" height="4" fill="#4c3010"/>
<rect x="315" y="448" width="7" height="4" fill="#4c3010"/>
<rect x="41" y="452" width="7" height="3" fill="#868686"/>
<rect x="96" y="452" width="7" height="3" fill="#868686"/>
<rect x="260" y="452" width="7" height="3" fill="#868686"/>
<rect x="315" y="452" width="7" height="3" fill="#868686"/>
<rect x="41" y="538" width="7" height="3" fill="#1a281b"/>
<rect x="92" y="538" width="7" height="3" fill="#1a281b"/>
<rect x="41" y="541" width="7" height="4" fill="#1a281b"/>
<rect x="92" y="541" width="7" height="4" fill="#1a281b"/>
<rect x="144" y="541" width="7" height="4" fill="#1a281b"/>
<rect x="144" y="545" width="7" height="3" fill="#1a281b"/>
<rect x="37" y="545" width="14" height="3" fill="#2c3d27"/>
<rect x="92" y="545" width="14" height="3" fill="#2c3d27"/>
<rect x="144" y="548" width="3" height="3" fill="#1a281b"/>
<rect x="41" y="548" width="7" height="3" fill="#2c3d27"/>
<rect x="96" y="548" width="7" height="3" fill="#2c3d27"/>
<rect x="147" y="548" width="11" height="3" fill="#2c3d27"/>
<rect x="37" y="548" width="4" height="3" fill="#f7d8a2"/>
<rect x="48" y="548" width="3" height="3" fill="#f7d8a2"/>
<rect x="92" y="548" width="4" height="3" fill="#f7d8a2"/>
<rect x="103" y="548" width="3" height="3" fill="#f7d8a2"/>
<rect x="188" y="551" width="7" height="4" fill="#1a281b"/>
<rect x="41" y="551" width="7" height="4" fill="#2c3d27"/>
<rect x="96" y="551" width="7" height="4" fill="#2c3d27"/>
<rect x="147" y="551" width="7" height="4" fill="#2c3d27"/>
<rect x="195" y="551" width="11" height="4" fill="#2c3d27"/>
<rect x="37" y="551" width="4" height="4" fill="#f7d8a2"/>
<rect x="48" y="551" width="3" height="4" fill="#f7d8a2"/>
<rect x="92" y="551" width="4" height="4" fill="#f7d8a2"/>
<rect x="103" y="551" width="3" height="4" fill="#f7d8a2"/>
<rect x="144" y="551" width="3" height="4" fill="#f7d8a2"/>
<rect x="154" y="551" width="4" height="4" fill="#f7d8a2"/>
<rect x="188" y="555" width="7" height="3" fill="#1a281b"/>
<rect x="236" y="555" width="7" height="3" fill="#1a281b"/>
<rect x="195" y="555" width="4" height="3" fill="#2c3d27"/>
<rect x="41" y="555" width="7" height="3" fill="#5a3a15"/>
<rect x="96" y="555" width="7" height="3" fill="#5a3a15"/>
<rect x="147" y="555" width="7" height="3" fill="#5a3a15"/>
<rect x="206" y="555" width="6" height="3" fill="#5a3a15"/>
<rect x="199" y="555" width="7" height="3" fill="#f7d8a2"/>
<rect x="236" y="558" width="7" height="4" fill="#1a281b"/>
<rect x="291" y="558" width="7" height="4" fill="#1a281b"/>
<rect x="243" y="558" width="4" height="4" fill="#2c3d27"/>
<rect x="41" y="558" width="7" height="4" fill="#4c3010"/>
<rect x="96" y="558" width="7" height="4" fill="#4c3010"/>
<rect x="151" y="558" width="7" height="4" fill="#4c3010"/>
<rect x="206" y="558" width="6" height="4" fill="#4c3010"/>
<rect x="247" y="558" width="7" height="4" fill="#f7d8a2"/>
<rect x="291" y="562" width="7" height="3" fill="#1a281b"/>
<rect x="298" y="562" width="4" height="3" fill="#2c3d27"/>
<rect x="254" y="562" width="6" height="3" fill="#5a3a15"/>
<rect x="309" y="562" width="6" height="3" fill="#5a3a15"/>
<rect x="41" y="562" width="7" height="3" fill="#868686"/>
<rect x="96" y="562" width="7" height="3" fill="#868686"/>
<rect x="151" y="562" width="7" height="3" fill="#868686"/>
<rect x="206" y="562" width="6" height="3" fill="#868686"/>
<rect x="260" y="562" width="4" height="3" fill="#868686"/>
<rect x="315" y="562" width="4" height="3" fill="#868686"/>
<rect x="302" y="562" width="7" height="3" fill="#f7d8a2"/>
<rect x="41" y="593" width="7" height="3" fill="#1a281b"/>
<rect x="99" y="593" width="7" height="3" fill="#1a281b"/>
<rect x="41" y="596" width="7" height="3" fill="#1a281b"/>
<rect x="99" y="596" width="7" height="3" fill="#1a281b"/>
<rect x="158" y="596" width="6" height="3" fill="#1a281b"/>
<rect x="158" y="599" width="6" height="4" fill="#1a281b"/>
<rect x="37" y="599" width="14" height="4" fill="#2c3d27"/>
<rect x="92" y="599" width="14" height="4" fill="#2c3d27"/>
<rect x="161" y="603" width="3" height="3" fill="#1a281b"/>
<rect x="41" y="603" width="7" height="3" fill="#2c3d27"/>
<rect x="96" y="603" width="7" height="3" fill="#2c3d27"/>
<rect x="151" y="603" width="10" height="3" fill="#2c3d27"/>
<rect x="37" y="603" width="4" height="3" fill="#f7d8a2"/>
<rect x="48" y="603" width="3" height="3" fill="#f7d8a2"/>
<rect x="92" y="603" width="4" height="3" fill="#f7d8a2"/>
<rect x="103" y="603" width="3" height="3" fill="#f7d8a2"/>
<rect x="223" y="606" width="7" height="4" fill="#1a281b"/>
<rect x="41" y="606" width="7" height="4" fill="#2c3d27"/>
<rect x="96" y="606" width="7" height="4" fill="#2c3d27"/>
<rect x="154" y="606" width="7" height="4" fill="#2c3d27"/>
<rect x="212" y="606" width="11" height="4" fill="#2c3d27"/>
<rect x="37" y="606" width="4" height="4" fill="#f7d8a2"/>
<rect x="48" y="606" width="3" height="4" fill="#f7d8a2"/>
<rect x="92" y="606" width="4" height="4" fill="#f7d8a2"/>
<rect x="103" y="606" width="3" height="4" fill="#f7d8a2"/>
<rect x="151" y="606" width="3" height="4" fill="#f7d8a2"/>
<rect x="161" y="606" width="3" height="4" fill="#f7d8a2"/>
<rect x="223" y="610" width="7" height="3" fill="#1a281b"/>
<rect x="284" y="610" width="7" height="3" fill="#1a281b"/>
<rect x="219" y="610" width="4" height="3" fill="#2c3d27"/>
<rect x="41" y="610" width="7" height="3" fill="#5a3a15"/>
<rect x="96" y="610" width="7" height="3" fill="#5a3a15"/>
<rect x="154" y="610" width="7" height="3" fill="#5a3a15"/>
<rect x="206" y="610" width="6" height="3" fill="#5a3a15"/>
<rect x="212" y="610" width="7" height="3" fill="#f7d8a2"/>
<rect x="284" y="613" width="7" height="4" fill="#1a281b"/>
<rect x="339" y="613" width="7" height="4" fill="#1a281b"/>
<rect x="281" y="613" width="3" height="4" fill="#2c3d27"/>
<rect x="41" y="613" width="7" height="4" fill="#4c3010"/>
<rect x="96" y="613" width="7" height="4" fill="#4c3010"/>
<rect x="151" y="613" width="7" height="4" fill="#4c3010"/>
<rect x="206" y="613" width="6" height="4" fill="#4c3010"/>
<rect x="274" y="613" width="7" height="4" fill="#f7d8a2"/>
<rect x="339" y="617" width="7" height="3" fill="#1a281b"/>
<rect x="336" y="617" width="3" height="3" fill="#2c3d27"/>
<rect x="267" y="617" width="7" height="3" fill="#5a3a15"/>
<rect x="322" y="617" width="7" height="3" fill="#5a3a15"/>
<rect x="41" y="617" width="7" height="3" fill="#868686"/>
<rect x="96" y="617" width="7" height="3" fill="#868686"/>
<rect x="151" y="617" width="7" height="3" fill="#868686"/>
<rect x="206" y="617" width="6" height="3" fill="#868686"/>
<rect x="264" y="617" width="3" height="3" fill="#868686"/>
<rect x="319" y="617" width="3" height="3" fill="#868686"/>
<rect x="329" y="617" width="7" height="3" fill="#f7d8a2"/>
<g clip-path="url(#cv)"><use href="#dots" stroke="#c4c4c4"/></g>
<g clip-path="url(#sp)"><use href="#dots" stroke="#d2d2d2"/></g>
<path d="M17.5 127 V812 M72.5 127 V812 M127.5 127 V812 M182.5 127 V812 M236.5 127 V812 M291.5 127 V812 M346.5 127 V812 M401.5 127 V812 M456.5 127 V812 M511.5 127 V812 M566.5 127 V812 M621.5 127 V812 M0 181.5 H648 M0 236.5 H648 M0 291.5 H648 M0 346.5 H648 M0 401.5 H648 M0 455.5 H648 M0 510.5 H648 M0 565.5 H648 M0 620.5 H648 M0 675.5 H648 M0 730.5 H648 M0 785.5 H648" stroke="#7d7d7d" stroke-width="1" fill="none"/>
</svg>
<div class="a" style="left:0;top:835px;width:850px;height:15px;background:#4b4b4b"></div>
<div class="a" style="left:187px;top:837px;width:394px;height:12px;background:#6a6a6a"></div>
<svg width="850" height="92" viewBox="0 0 850 92" style="position:absolute;left:0;top:0">
<defs>
<pattern id="hatch" width="2" height="2" patternUnits="userSpaceOnUse"><rect width="2" height="2" fill="#575757"/><rect width="1" height="1" fill="#7e7e7e"/><rect x="1" y="1" width="1" height="1" fill="#7e7e7e"/></pattern>
</defs>
<!-- left dropdown (cropped) -->
<rect x="-8" y="36.5" width="19.5" height="16" rx="2.5" fill="#464646" stroke="#5f5f5f" stroke-width="1"/>
<path d="M0.9 44.1 L4.4 47.5 L7.9 44.1" fill="none" stroke="#c4c4c4" stroke-width="1.05"/>
<!-- pressure-opacity icon -->
<circle cx="31.3" cy="47.1" r="6.7" fill="url(#hatch)" stroke="#d2d2d2" stroke-width="1.2"/>
<path d="M30.9 47.4 L32.0 44.1 L39.0 37.5 L41.6 40.1 L34.6 46.5 Z" fill="#e6e6e6" stroke="#535353" stroke-width="0.9"/>
<path d="M38 38.9 L40.3 41.2" stroke="#777" stroke-width="0.8"/>
<!-- separators -->
<g stroke="#3b3b3b" stroke-width="1" shape-rendering="crispEdges">
<path d="M51.5 34 V57"/><path d="M178.5 34 V57"/><path d="M329.5 34 V57"/><path d="M394.5 34 V57"/>
</g>
<!-- flow box (disabled) -->
<rect x="87.5" y="36.5" width="51" height="16" rx="2.5" fill="#4e4e4e" stroke="#5e5e5e" stroke-width="1"/>
<rect x="88.6" y="37.6" width="34" height="13.8" fill="#444444"/>
<path d="M123.5 37 V52" stroke="#5e5e5e" stroke-width="1" shape-rendering="crispEdges"/>
<path d="M128 44.2 L131.3 47.4 L134.6 44.2" fill="none" stroke="#6c6c6c" stroke-width="1.1"/>
<!-- airbrush (disabled) -->
<path d="M156.6 39.6 C151.6 40.4 149.4 46.6 154 50.6" fill="none" stroke="#727272" stroke-width="2.6"/>
<path d="M155.6 51.6 L163.4 42.2 L165.6 40.6 L166.8 42.6 L164.6 46.2 L161.6 47.6 Z" fill="none" stroke="#8c8c8c" stroke-width="1"/>
<path d="M162.4 42.8 L165.6 40.8 L166.6 42.6 L164.6 46 L163 46.2 Z" fill="#8a8a8a"/>
<circle cx="167" cy="39.9" r="1.1" fill="#8a8a8a"/>
<path d="M161.8 47.4 L163.4 50.6 L165.2 50.8 L165.8 49.2 L163.6 46.8" fill="none" stroke="#8c8c8c" stroke-width="1"/>
<path d="M156.4 51.2 L159.2 49.8 L161.2 48.8" fill="none" stroke="#8c8c8c" stroke-width="1"/>
<!-- smoothing box -->
<rect x="243.5" y="36.5" width="50" height="16" rx="2.5" fill="#3f3f3f" stroke="#656565" stroke-width="1"/>
<path d="M278.5 37 V52" stroke="#656565" stroke-width="1" shape-rendering="crispEdges"/>
<path d="M283.2 44.2 L286.5 47.4 L289.8 44.2" fill="none" stroke="#c6c6c6" stroke-width="1"/>
<!-- gear -->
<g transform="translate(311.5 45.3)">
<g fill="#e0e0e0">
<rect x="-1.25" y="-6.6" width="2.5" height="13.2" rx="0.5"/>
<rect x="-1.25" y="-6.6" width="2.5" height="13.2" rx="0.5" transform="rotate(45)"/>
<rect x="-1.25" y="-6.6" width="2.5" height="13.2" rx="0.5" transform="rotate(90)"/>
<rect x="-1.25" y="-6.6" width="2.5" height="13.2" rx="0.5" transform="rotate(135)"/>
<circle r="4.7"/>
</g>
<circle r="2.3" fill="#535353"/>
</g>
<path d="M317 53 H321.2 L319.1 55.2 Z" fill="#e6e6e6"/>
<!-- angle icon -->
<path d="M347.1 40.1 L336.4 48.3 H349" fill="none" stroke="#d8d8d8" stroke-width="1.2" stroke-linejoin="round"/>
<path d="M343.8 42.8 C345.6 44 346.7 45.8 346.8 48.2" fill="none" stroke="#c8c8c8" stroke-width="1"/>
<!-- angle box -->
<rect x="353.5" y="36.5" width="35" height="16" fill="#3f3f3f" stroke="#6a6a6a" stroke-width="1" shape-rendering="crispEdges"/>
<!-- checkbox (disabled) -->
<rect x="399.5" y="40.5" width="9" height="9" rx="1.5" fill="#4f4f4f" stroke="#626262" stroke-width="1"/>
<!-- target + pen icon -->
<path d="M511.6 39.6 A6.8 6.8 0 1 0 516.1 44.6" fill="none" stroke="#d6d6d6" stroke-width="1.25"/>
<path d="M510 42.6 A3.8 3.8 0 1 0 513.2 45.4" fill="none" stroke="#d6d6d6" stroke-width="1.25"/>
<path d="M508.9 46.5 L510.0 43.3 L516.9 36.9 L519.5 39.5 L512.4 45.7 Z" fill="#e6e6e6" stroke="#535353" stroke-width="0.8"/>
<path d="M515.9 38 L518.4 40.5" stroke="#7a7a7a" stroke-width="0.8"/>
<!-- butterfly -->
<g fill="none" stroke="#d4d4d4" stroke-width="1.15">
<path d="M540.8 42.6 C539.4 40.6 535.6 38.2 534.2 39.4 C533.4 41 535.4 43.6 537.4 45.6 C535 46.2 534.6 48.8 536.2 50.6 C537.6 52.4 539.8 52.8 540.8 51.4"/>
<path d="M544 42.6 C545.4 40.6 549.2 38.2 550.6 39.4 C551.4 41 549.4 43.6 547.4 45.6 C549.8 46.2 550.2 48.8 548.6 50.6 C547.2 52.4 545 52.8 544 51.4"/>
</g>
<path d="M542.5 38 V55" stroke="#f0f0f0" stroke-width="1" stroke-dasharray="1 1" shape-rendering="crispEdges"/>
<path d="M547.4 53 H550.8 L549.1 54.7 Z" fill="#e6e6e6"/>
<!-- tab close X -->
<g stroke-width="1" fill="none">
<path d="M128 74.3 L134 80.3 M134 74.3 L128 80.3" stroke="#cfcfcf"/>
<path d="M306.2 74.3 L312.2 80.3 M312.2 74.3 L306.2 80.3" stroke="#bdbdbd"/>
<path d="M483.8 74.3 L489.8 80.3 M489.8 74.3 L483.8 80.3" stroke="#bdbdbd"/>
<path d="M689 74.3 L695 80.3 M695 74.3 L689 80.3" stroke="#bdbdbd"/>
</g>
</svg>

<span class="t" id="m1" style="font-size:12.9px;color:#dcdcdc;top:6.08015px;transform:scaleX(1.0004);right:821.7px;transform-origin:100% 0;">Plugins</span>
<span class="t" id="m2" style="font-size:12.9px;color:#dcdcdc;top:6.08015px;transform:scaleX(0.9442);left:40.5px;transform-origin:0 0;">Window</span>
<span class="t" id="m3" style="font-size:12.9px;color:#dcdcdc;top:6.08015px;transform:scaleX(0.8863);left:96.8px;transform-origin:0 0;">Help</span>
<span class="t" id="o1" style="font-size:10px;color:#cfcfcf;top:40.835px;transform:scaleX(0.9244);left:61.2px;transform-origin:0 0;">Flow:</span>
<span class="t" id="o2" style="font-size:10px;color:#cfcfcf;top:40.835px;transform:scaleX(0.9883);left:186.9px;transform-origin:0 0;">Smoothing:</span>
<span class="t" id="o3" style="font-size:10px;color:#e4e4e4;top:40.835px;transform:scaleX(1.0309);left:248px;transform-origin:0 0;">0%</span>
<span class="t" id="o4" style="font-size:10px;color:#e4e4e4;top:40.835px;transform:scaleX(1.0771);left:357.7px;transform-origin:0 0;">0&deg;</span>
<span class="t" id="o5" style="font-size:10px;color:#868686;top:40.835px;transform:scaleX(0.9769);left:414.5px;transform-origin:0 0;">Erase to History</span>
<span class="t" id="t1" style="font-size:10.9px;color:#e2e2e2;top:71.7732px;transform:scaleX(0.9897);font-weight:bold;left:2px;transform-origin:0 0;">3% (Looter_4, RGB/8) *</span>
<span class="t" id="t1b" style="font-size:10.9px;color:#e2e2e2;top:71.7732px;transform:scaleX(1.0000);font-weight:bold;right:849.1px;transform-origin:100% 0;">4</span>
<span class="t" id="t2" style="font-size:10.9px;color:#b2b2b2;top:71.7732px;transform:scaleX(0.9706);font-weight:bold;left:156px;transform-origin:0 0;">Spritesheet Looter_sgt..psd</span>
<span class="t" id="t3" style="font-size:10.9px;color:#b2b2b2;top:71.7732px;transform:scaleX(0.9580);font-weight:bold;left:334.1px;transform-origin:0 0;">Spritesheet Deli_asst..psd</span>
<span class="t" id="t4" style="font-size:10.9px;color:#b2b2b2;top:71.7732px;transform:scaleX(0.9689);font-weight:bold;left:512.5px;transform-origin:0 0;">Spritesheet Warehouse_crew.psd</span>
<span class="t" id="t5" style="font-size:10.9px;color:#b2b2b2;top:71.7732px;transform:scaleX(0.9450);font-weight:bold;left:717px;transform-origin:0 0;">Spritesheet Tech_asst..psd</span>
</body></html>
